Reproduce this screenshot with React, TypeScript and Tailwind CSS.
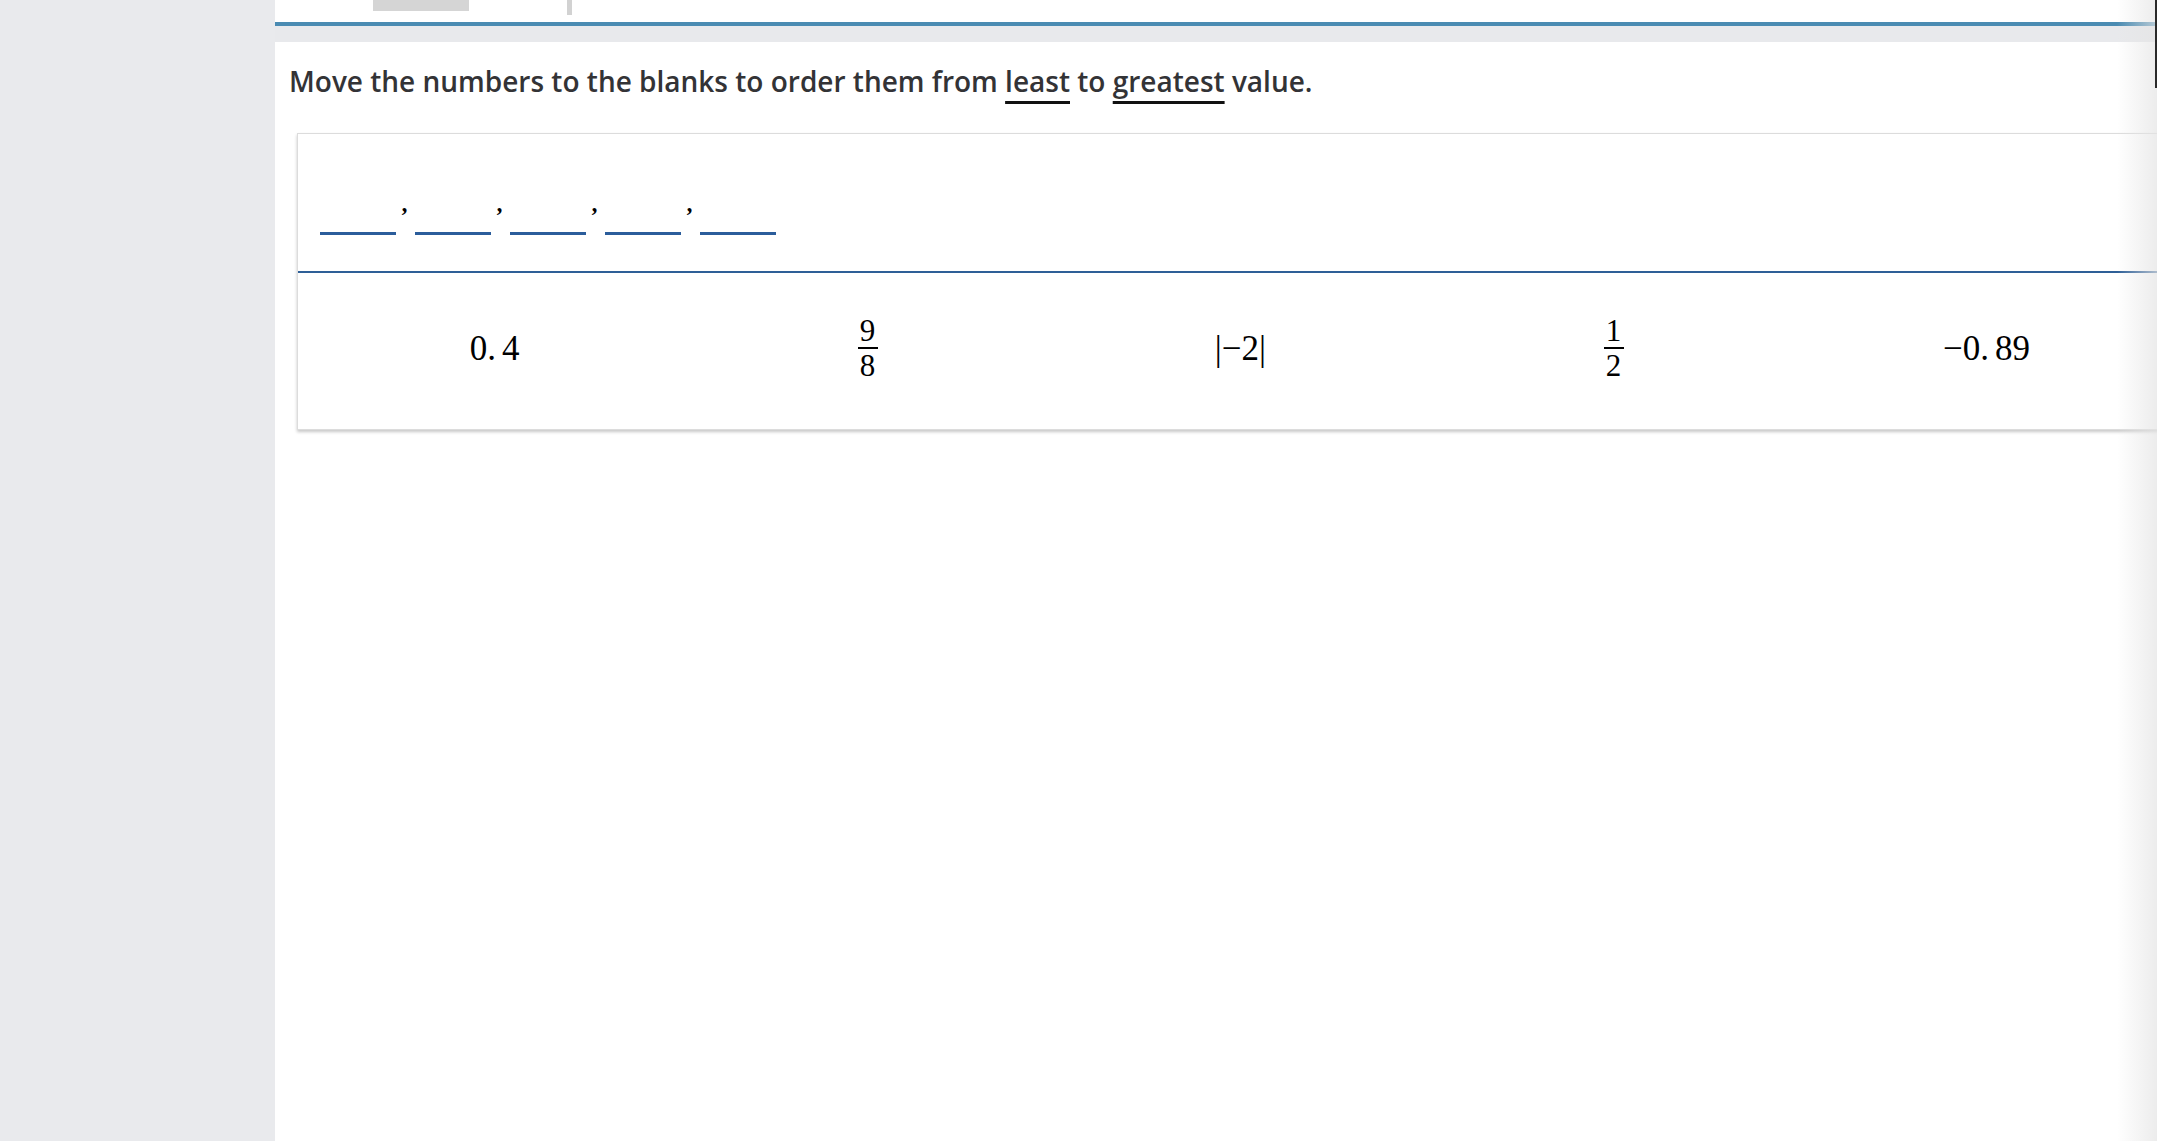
import React from 'react';

const serif = { fontFamily: '"Liberation Serif", "Times New Roman", serif' };

const Frac: React.FC<{ num: string; den: string }> = ({ num, den }) => (
    <span className="inline-flex flex-col items-center leading-none text-[31px]" style={serif}>
        <span className="leading-[25px]">{num}</span>
        <span className="w-[20px] h-[2px] bg-black my-[4px]" />
        <span className="leading-[25px]">{den}</span>
    </span>
);

const Dec: React.FC<{ a: string; b: string }> = ({ a, b }) => (
    <span className="text-[35px] leading-none" style={serif}>
        {a}.<span className="ml-[6px]">{b}</span>
    </span>
);

const App: React.FC = () => {
    const blanks = [0, 1, 2, 3, 4];
    return (
        <div className="flex w-full h-screen overflow-hidden bg-white relative">
            <div className="w-[275px] shrink-0 h-full bg-[#e9eaed]" />
            <div className="flex-1 flex flex-col min-w-0">
                {/* top tab strip, mostly cut off */}
                <div className="h-[22px] relative bg-white">
                    <div className="absolute left-[98px] top-0 w-[96px] h-[11px] bg-[#d5d5d5]" />
                    <div className="absolute left-[292px] top-0 w-[5px] h-[15px] bg-[#d2d2d2]" />
                </div>
                <div className="h-[4px] bg-[#4a8bb2]" />
                <div className="h-[16px] bg-[#e8e9ec]" />

                <div className="pl-[14px] mt-[21px] text-[28px] leading-[36px] font-semibold text-[#333336] whitespace-nowrap" style={{ fontFamily: '"Open Sans", sans-serif' }}>
                    Move the numbers to the blanks to order them from{' '}
                    <span className="underline decoration-[3px] decoration-[#111] underline-offset-[9px]">least</span> to{' '}
                    <span className="underline decoration-[3px] decoration-[#111] underline-offset-[9px]">greatest</span> value.
                </div>

                <div className="ml-[22px] mt-[34px] w-[1890px] border border-[#dcdcdc] bg-white shadow-[0_2px_3px_rgba(0,0,0,0.22)]">
                    <div className="h-[137px] flex items-end pl-[22px] pb-[36px]">
                        {blanks.map((i) => (
                            <div key={i} className="flex items-end">
                                <div className="w-[76px] h-[3px] bg-[#2b5d9b]" />
                                {i < 4 && (
                                    <span className="w-[19px] text-center text-[24px] leading-none font-bold italic mb-[20px] text-black" style={serif}>,</span>
                                )}
                            </div>
                        ))}
                    </div>
                    <div className="h-[2px] bg-[#2e5f97]" />
                    <div className="h-[156px] grid grid-cols-[repeat(5,373px)] px-[10px] items-center text-black pb-[6px]">
                        <div className="flex justify-center"><Dec a="0" b="4" /></div>
                        <div className="flex justify-center"><Frac num="9" den="8" /></div>
                        <div className="flex justify-center">
                            <span className="text-[35px] leading-none" style={serif}>|−2|</span>
                        </div>
                        <div className="flex justify-center"><Frac num="1" den="2" /></div>
                        <div className="flex justify-center"><Dec a="−0" b="89" /></div>
                    </div>
                </div>
            </div>

            {/* right edge shade of the neighbouring panel */}
            <div className="absolute right-0 top-0 h-full w-[40px] bg-gradient-to-r from-transparent to-[#e4e4e4] opacity-70 pointer-events-none" />
            <div className="absolute right-0 top-0 w-[2px] h-[88px] bg-[#2a2a2a]" />
        </div>
    );
};

export default App;
